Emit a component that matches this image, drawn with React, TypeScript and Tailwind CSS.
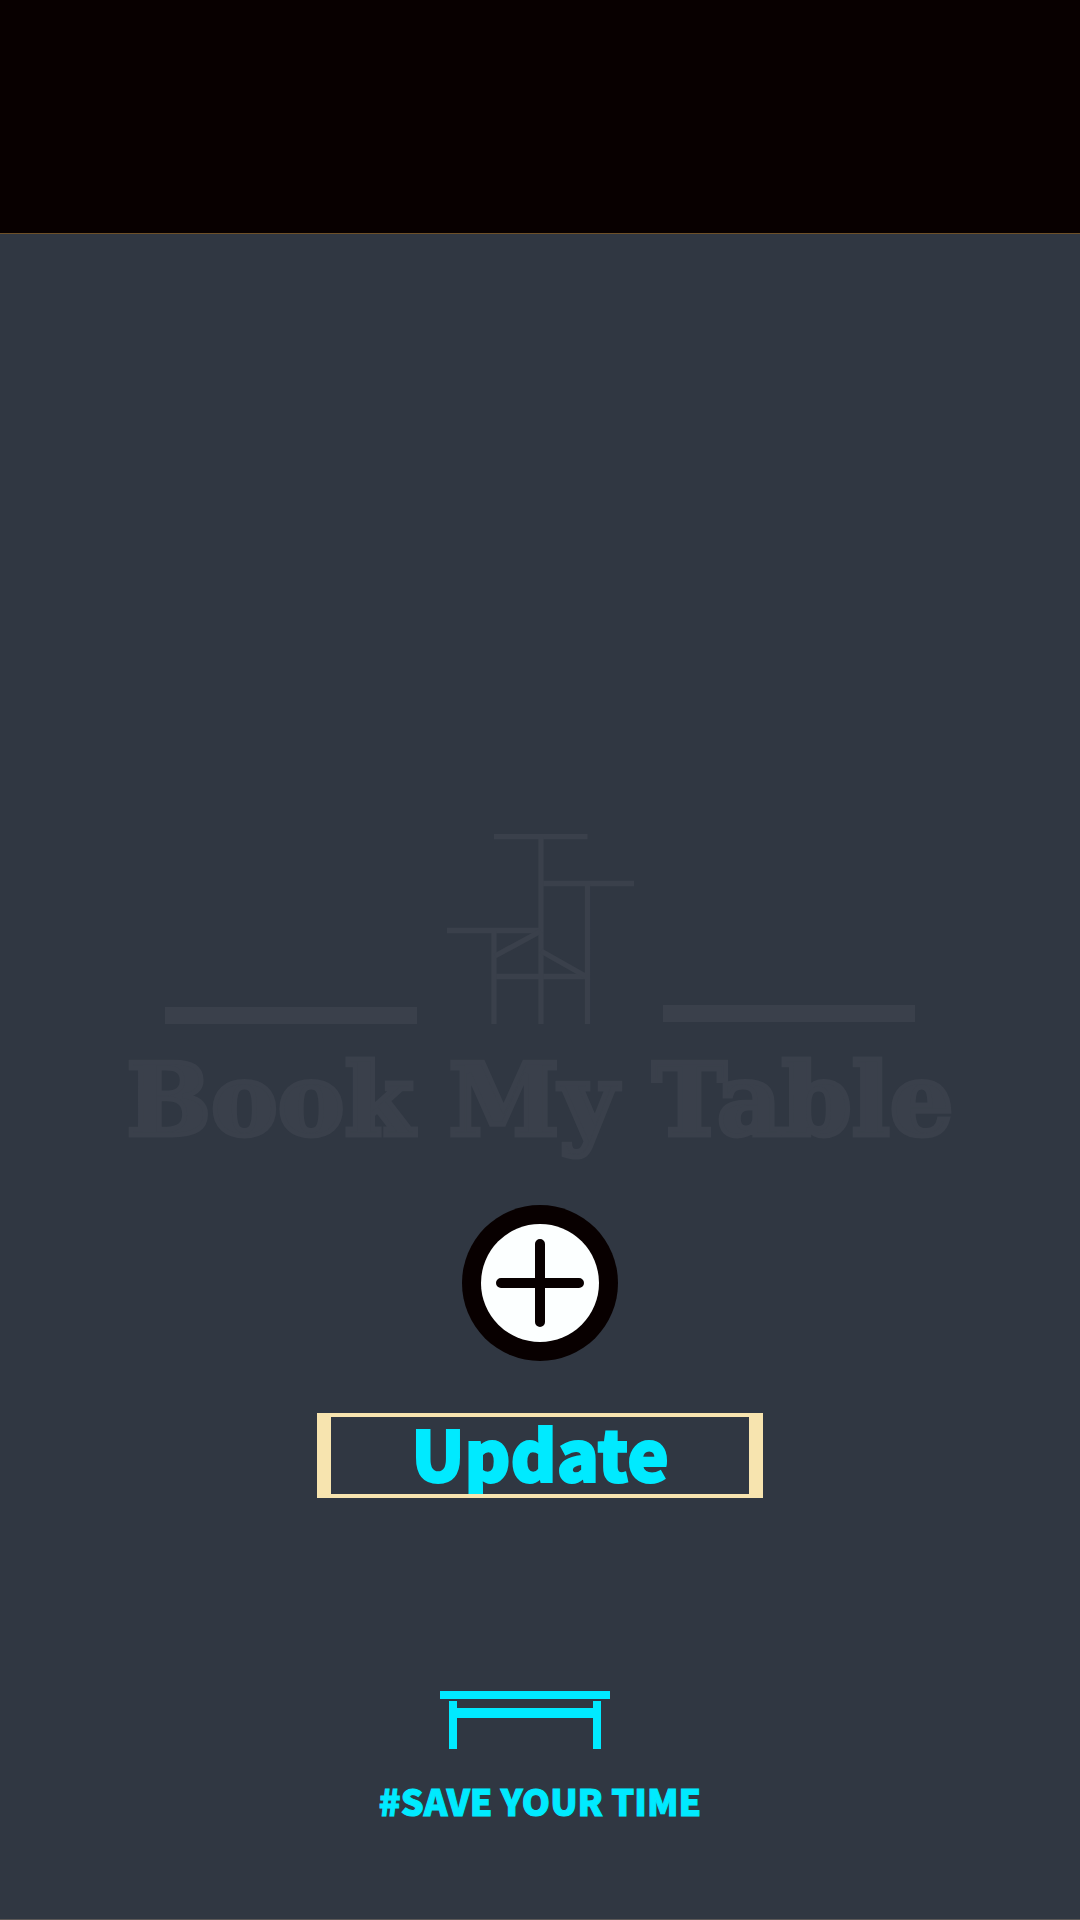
function ChairMark() {
  return (
    <svg
      viewBox="0 0 188 190"
      className="h-[190px] w-[188px]"
      fill="none"
      stroke="currentColor"
      strokeWidth="5.300"
      aria-hidden="true"
    >
      <path d="M48 2.500H141.500M95 49.500H188M1 96.500H95M48 142.500H141" />
      <path d="M48 97V190M95 3V190" />
      <path d="M141.500 50V190M49 122L95 97M95 117L141 143" />
    </svg>
  );
}

function Watermark() {
  return (
    <div className="flex flex-col items-center text-[#3a404b]">
      <div className="flex items-end justify-center gap-[29px]">
        <div className="h-[17px] w-[252px] bg-[#3a404b]" />
        <ChairMark />
        <div className="mb-0.5 h-[17px] w-[252px] bg-[#3a404b]" />
      </div>
      <h1 className="mt-4 whitespace-nowrap font-['DejaVu_Serif',serif] text-[100px] leading-[120px] font-bold [-webkit-text-stroke:5px_#3a404b]">
        Book My Table
      </h1>
    </div>
  );
}

function PlusIcon() {
  return (
    <svg viewBox="0 0 156 156" className="size-[156px]" aria-hidden="true">
      <circle cx="78" cy="78" r="78" fill="#080000" />
      <circle cx="78" cy="78" r="59" fill="#fcffff" />
      <path d="M78 39V117M39 78H117" stroke="#080000" strokeWidth="10" strokeLinecap="round" />
    </svg>
  );
}

function TableIcon() {
  return (
    <svg viewBox="0 0 170 58" className="mr-[30px] h-[58px] w-[170px]" fill="currentColor" aria-hidden="true">
      <path d="M0 0H170V8H0ZM9 10H17V58H9ZM153 10H161V58H153ZM17 17H153V27H17Z" />
    </svg>
  );
}

export default function App() {
  return (
    <div className="flex min-h-screen flex-col border-b border-[#5b5857] bg-[#303742] font-['Noto_Sans_CJK_JP','Noto_Sans',sans-serif]">
      <header className="h-[234px] border-b border-[#6e5028] bg-[#080000]" />
      <main className="flex flex-1 flex-col items-center pt-[600px]">
        <Watermark />
        <button type="button" aria-label="Add" className="mt-[45px] rounded-full">
          <PlusIcon />
        </button>
        <button
          type="button"
          className="mt-[52px] flex h-[85px] w-[446px] items-center justify-center overflow-hidden border-x-[14px] border-y-4 border-[#f7e4af] pb-2 text-[70px] leading-[69px] font-black text-[#00eaff] [-webkit-text-stroke:2px_#00eaff]"
        >
          Update
        </button>
        <footer className="mt-[193px] flex flex-col items-center text-[#00eaff]">
          <TableIcon />
          <p className="mt-[27px] text-[36px] leading-[48px] font-black [-webkit-text-stroke:1px_#00eaff]">
            #SAVE YOUR TIME
          </p>
        </footer>
      </main>
    </div>
  );
}
